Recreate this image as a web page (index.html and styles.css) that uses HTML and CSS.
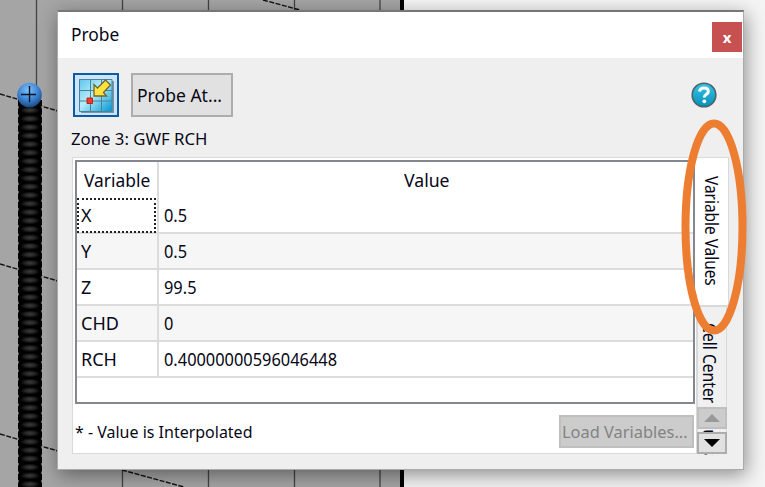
FILE: index.html
```html
<!DOCTYPE html>
<html lang="en">
<head>
<meta charset="utf-8">
<title>Probe</title>
<link rel="stylesheet" href="styles.css">
</head>
<body>
<svg class="scene" viewBox="0 0 765 487" aria-hidden="true">
  <defs>
    <radialGradient id="ball" cx=".45" cy=".3" r=".7"><stop offset="0" stop-color="#83c2f8"/><stop offset=".55" stop-color="#3e87d6"/><stop offset="1" stop-color="#1c4b86"/></radialGradient>
    <radialGradient id="bead"><stop offset="0" stop-color="#3c3c3c"/><stop offset=".5" stop-color="#242424"/><stop offset="1" stop-color="#000"/></radialGradient>
    <pattern id="beads" x="18" y="106" width="24" height="8.5" patternUnits="userSpaceOnUse"><rect width="24" height="8.5"/><ellipse cx="12" cy="4.2" rx="10" ry="3.6" fill="url(#bead)"/></pattern>
  </defs>
  <rect width="403" height="487" fill="#a5a5a5"/>
  <g stroke="#444" stroke-width="1.3"><path d="M36.500 0V90M122.500 0V487M208.500 0V487M294.500 0V487M380 0V487"/></g>
  <path d="M402 0V487" stroke="#000" stroke-width="4"/>
  <g stroke="#111" stroke-width="1.4" stroke-dasharray="5 1.500"><path d="M0 94L58 111M0 264L58 281M0 434L58 451M122 470L184 487M263 0L300 10"/></g>
  <rect x="18" y="100" width="24" height="387" fill="url(#beads)"/>
  <path d="M18.500 106V487M41.500 106V487" stroke="#666" stroke-dasharray="2.500 6"/>
  <circle cx="29.500" cy="95" r="12.300" fill="url(#ball)"/>
  <path d="M21 94.500H36M29.500 86V102" stroke="#051525" stroke-width="1.400"/>
</svg>
<main class="dialog">
  <header class="titlebar"><h1><span class="t">Probe</span></h1><button class="close">x</button></header>
  <div class="toolbar">
    <button class="probe">
      <svg width="38" height="38" viewBox="0 0 38 38">
        <defs><linearGradient id="tile" x2="1" y2="1"><stop stop-color="#58c5ee"/><stop offset=".45" stop-color="#b9edfa"/><stop offset="1" stop-color="#0098d5"/></linearGradient></defs>
        <path d="M4 5H37V37H4z" fill="#7895a5"/><path d="M2 3H35V35H2z" fill="url(#tile)"/>
        <path d="M2.500 3.500H35V35.500H2.500zM13.500 3V35M24.500 3V35M2 14.500H35M2 25H35" fill="none" stroke="#4c8298"/>
        <path d="M28.500 4L33.500 9L26.500 16.500L29.500 20H17V8.500L20.500 12z" fill="#ffe23c" stroke="#6c6638" stroke-width="1.300"/>
        <path d="M10 22H15.500V27.500H10z" fill="#ef3b27" stroke="#bf2518"/>
      </svg>
    </button>
    <button class="probe-at"><span class="t">Probe At...</span></button>
    <svg class="help" width="26" height="26" viewBox="0 0 26 26">
      <defs><linearGradient id="help" x2="0" y2="1"><stop stop-color="#36c6e6"/><stop offset="1" stop-color="#078fb8"/></linearGradient></defs>
      <circle cx="13" cy="13" r="11.800" fill="url(#help)" stroke="#4d626b" stroke-width="1.600"/>
      <path d="M8.500 9.500Q9 6 13 6Q17.300 6 17.300 9.500C17.300 12.500 13.300 12 13.300 15.500" fill="none" stroke="#fff" stroke-width="3"/><circle cx="13.300" cy="19.300" r="1.900" fill="#fff"/>
    </svg>
  </div>
  <p class="zone"><span class="t">Zone 3: GWF RCH</span></p>
  <div class="body">
    <section class="panel">
      <div class="grid">
        <div class="row head"><span><b class="t">Variable</b></span><span><b class="t">Value</b></span></div>
        <div class="row"><span class="focus"><b class="t">X</b></span><span><b class="t">0.5</b></span></div>
        <div class="row alt"><span><b class="t">Y</b></span><span><b class="t">0.5</b></span></div>
        <div class="row"><span><b class="t">Z</b></span><span><b class="t">99.5</b></span></div>
        <div class="row alt"><span><b class="t">CHD</b></span><span><b class="t">0</b></span></div>
        <div class="row"><span><b class="t">RCH</b></span><span><b class="t">0.40000000596046448</b></span></div>
      </div>
      <footer><span class="t note">* - Value is Interpolated</span><button class="load"><span class="t">Load Variables...</span></button></footer>
    </section>
    <nav class="tabs">
      <div class="tab active"><span class="v">Variable Values</span></div>
      <div class="tab second"><span class="v">Cell Center Values</span></div>
      <div class="scroll">
        <button class="up"><svg width="18" height="10"><path d="M1 9H17L9 1z" fill="#999"/></svg></button>
        <button><svg width="18" height="10"><path d="M1 1H17L9 9z"/></svg></button>
      </div>
    </nav>
  </div>
</main>
<svg class="ring" width="66" height="216" viewBox="0 0 66 216" aria-hidden="true"><ellipse cx="33" cy="108" rx="28.500" ry="103.500"/></svg>
</body>
</html>
```
FILE: styles.css
```css
* { box-sizing: border-box; }
body { margin: 0; width: 765px; height: 487px; overflow: hidden; position: relative; background: #f4f4f4; color: #080818; font: 18px/24px "Noto Sans", sans-serif; padding: 10px 0 0 57px; }
.scene { position: absolute; inset: 0; width: 765px; height: 487px; }
button { margin: 0; padding: 0; font: inherit; color: inherit; border: 0; }
b { font-weight: 400; }
.t { display: inline-block; white-space: nowrap; transform: scaleX(.91); transform-origin: left center; }
.dialog { position: relative; width: 687px; height: 460px; background: #efefef; border: 1px solid #aaa; border-top: 2px solid #777; box-shadow: 2px 5px 18px rgba(0,0,0,.42); }
.titlebar { display: flex; justify-content: space-between; height: 46px; background: #fff; padding: 10px 1px 0 13px; }
h1 { margin: 0; font: inherit; }
h1 .t { transform: scaleX(.965); }
.close { width: 30px; height: 30px; background: #c75050; color: #fff; font: bold 15px/26px "Open Sans", sans-serif; }
.toolbar { display: flex; height: 44px; margin: 15px 26px 0 15px; }
.probe { width: 46px; height: 44px; border: 2px solid #0c5ba5; background: #cce4f7; display: grid; place-items: center; }
.probe-at { width: 102px; height: 44px; margin-left: 12px; border: 2px solid #adadad; background: #e1e1e1; text-align: left; padding-left: 4px; }
.probe-at .t { transform: scaleX(.975); }
.help { margin: 9px 0 0 auto; }
.zone { margin: 9px 0 0 13px; }
.zone .t { transform: scaleX(.985); font-size: 17px; }
.body { display: flex; margin: 6px 0 0 14px; height: 298px; }
.panel { width: 625px; height: 297px; border: 1px solid #d9d9d9; background: #fff; padding: 2px 0 0 2px; }
.grid { width: 620px; height: 244px; border: 2px solid #828790; }
.row { display: grid; grid-template-columns: 82px 1fr; height: 36px; border-bottom: 2px solid #dcdcdc; line-height: 35px; }
.row > span { padding-left: 5px; }
.row > span:first-child { padding-left: 4px; border-right: 2px solid #dcdcdc; }
.row > span:first-child .t { transform: scaleX(1); }
.head { height: 36px; border-bottom: 0; line-height: 37px; }
.row.head > span:first-child { padding-left: 7px; }
.row.head > span:first-child .t { transform: scaleX(.965); }
.row.head > span:last-child { text-align: center; padding-left: 2px; }
.row.head > span:last-child .t { transform: scaleX(.98); }
.alt { background: #f6f6f6; }
.row > .focus { position: relative; }
.focus::after { content: ""; position: absolute; inset: 0 1px 0 0; border: 2px dotted #222; }
footer { display: flex; justify-content: space-between; padding: 11px 2px 0 0; }
.note { margin-top: 5px; font-size: 17px; transform: scaleX(.94); }
.load { width: 135px; height: 33px; background: #ccc; border: 2px solid #bfbfbf; color: #838383; text-align: left; padding-left: 1px; font-size: 17px; }
.load .t { transform: scaleX(.965); }
.tabs { position: relative; width: 33px; height: 298px; }
.tab { writing-mode: vertical-rl; }
.v { display: inline-block; transform: scaleY(.87); transform-origin: center top; white-space: nowrap; }
.active { width: 34px; height: 149px; margin-left: -2px; background: #fff; border: 1px solid #d9d9d9; border-left: 0; padding: 18px 4px 0; }
.active .v { transform: scaleY(.855); }
.second { width: 30px; height: 148px; border: 1px solid #d9d9d9; background: #f0f0f0; padding: 16px 4px 0 0; }
.scroll { position: absolute; left: 0; top: 250px; display: grid; gap: 3px; }
.scroll button { width: 30px; height: 22px; background: #e1e1e1; border: 2px solid #adadad; display: grid; place-items: center; }
.scroll .up { background: #ccc; border-color: #bfbfbf; }
.ring { position: absolute; left: 681px; top: 119px; }
.ring ellipse { fill: none; stroke: #ed7d31; stroke-width: 8; }
```
